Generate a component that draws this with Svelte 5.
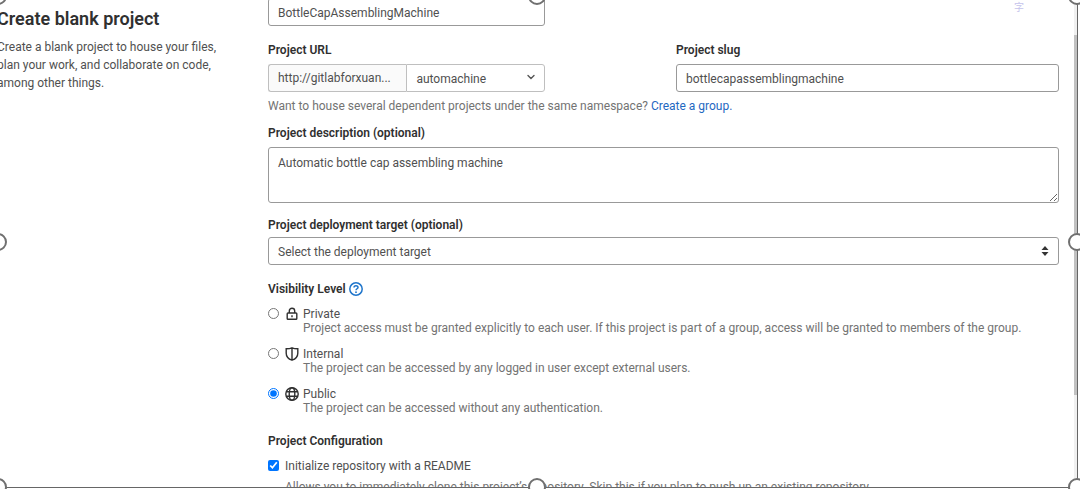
<script lang="ts">
  let name = $state('BottleCapAssemblingMachine');
  let slug = $state('bottlecapassemblingmachine');
  let namespace = $state('automachine');
  let description = $state('Automatic bottle cap assembling machine');
  let target = $state('');
  let visibility = $state('public');
  let readme = $state(true);

  const levels = [
    { id: 'private', title: 'Private', text: 'Project access must be granted explicitly to each user. If this project is part of a group, access will be granted to members of the group.' },
    { id: 'internal', title: 'Internal', text: 'The project can be accessed by any logged in user except external users.' },
    { id: 'public', title: 'Public', text: 'The project can be accessed without any authentication.' }
  ];

  const handles = ['top left', 'top center', 'top right', 'middle left', 'middle right', 'bottom left', 'bottom center', 'bottom right'];
</script>

<div class="canvas">
  <div class="window">
    <main class="page">
      <aside class="intro">
        <h1>Create blank project</h1>
        <p>Create a blank project to house your files, plan your work, and collaborate on code, among other things.</p>
      </aside>

      <form class="form">
        <div class="name-row">
          <input class="control name" aria-label="Project name" bind:value={name} />
          <span class="glyph">字</span>
        </div>

        <div class="url-row">
          <div class="url">
            <label class="label" for="namespace">Project URL</label>
            <div class="group">
              <span class="prefix">http://gitlabforxuan...</span>
              <div class="picker">
                <select id="namespace" class="control" bind:value={namespace}>
                  <option value="automachine">automachine</option>
                </select>
                <svg class="arrow" width="8" height="8" viewBox="0 0 8 8"><path d="M1 2.5l3 3 3-3" fill="none" stroke="#555" stroke-width="1.4" stroke-linecap="round" /></svg>
              </div>
            </div>
          </div>
          <div class="slug">
            <label class="label" for="slug">Project slug</label>
            <input id="slug" class="control" bind:value={slug} />
          </div>
        </div>
        <p class="help">Want to house several dependent projects under the same namespace? <a href="#group">Create a group.</a></p>

        <div class="field">
          <label class="label" for="description">Project description (optional)</label>
          <textarea id="description" class="control" bind:value={description}></textarea>
        </div>

        <div class="field target">
          <label class="label" for="target">Project deployment target (optional)</label>
          <div class="picker">
            <select id="target" class="control" bind:value={target}>
              <option value="">Select the deployment target</option>
            </select>
            <svg class="arrow" width="8" height="10" viewBox="0 0 8 10"><path d="M4 0l3.5 4h-7zM4 10l3.5-4h-7z" fill="#333" /></svg>
          </div>
        </div>

        <fieldset class="levels">
          <legend class="label">
            Visibility Level
            <a class="question" href="#visibility" aria-label="Visibility help">
              <svg width="14" height="14" viewBox="0 0 14 14" fill="none" stroke="#1f75cb" stroke-width="1.5">
                <circle cx="7" cy="7" r="6.2" />
                <path d="M5 5.6c0-2.6 4-2.5 4-.2C9 6.8 7 6.7 7 8.3" />
                <circle cx="7" cy="10.2" r=".9" fill="#1f75cb" stroke="none" />
              </svg>
            </a>
          </legend>
          {#each levels as l}
            <div class="level">
              <input type="radio" id={l.id} name="visibility" value={l.id} bind:group={visibility} />
              <svg class="icon" width="14" height="14" viewBox="0 0 14 14" fill="none" stroke="#303030" stroke-width="1.4">
                {#if l.id === 'private'}
                  <rect x="2.2" y="6" width="9.6" height="6.3" rx=".8" />
                  <path d="M4.3 6V4a2.7 2.7 0 0 1 5.4 0v2M7 8.3v2" />
                {:else if l.id === 'internal'}
                  <path d="M1.2 1.8C3.5 1.8 5.5 1.5 7 .8c1.5.7 3.5 1 5.8 1v4.4C12.8 9.5 10.5 12 7 13.2 3.5 12 1.2 9.5 1.2 6.2zM7 1v12" />
                {:else}
                  <circle cx="7" cy="7" r="6.2" />
                  <ellipse cx="7" cy="7" rx="2.8" ry="6.2" />
                  <path d="M1.3 4.7h11.4M1.3 9.3h11.4" />
                {/if}
              </svg>
              <label for={l.id}>
                {l.title}
                <span class="muted">{l.text}</span>
              </label>
            </div>
          {/each}
        </fieldset>

        <fieldset class="config">
          <legend class="label">Project Configuration</legend>
          <div class="check">
            <input type="checkbox" id="readme" bind:checked={readme} />
            <label for="readme">
              Initialize repository with a README
              <span class="muted">Allows you to immediately clone this project’s repository. Skip this if you plan to push up an existing repository.</span>
            </label>
          </div>
        </fieldset>
      </form>
    </main>
    <div class="scrollbar"><div class="thumb"></div></div>
  </div>

  {#each handles as h}
    <span class="handle {h}"></span>
  {/each}
</div>

<style>
  :global(body) { margin: 0; background: #fff; }

  .canvas {
    position: relative;
    height: 100vh;
    overflow: hidden;
    font: 12px/18px Roboto, "Noto Sans CJK SC", sans-serif;
    color: #505050;
  }
  .window {
    display: flex;
    height: calc(100vh - 2px);
    margin-right: 2px;
    border-right: 1px solid #666;
    border-bottom: 1px solid #666;
    overflow: hidden;
  }

  .page {
    flex: 1;
    min-width: 0;
    display: grid;
    grid-template-columns: 228px 1fr;
    gap: 43px;
    margin-left: -3px;
    padding-right: 15px;
    align-items: start;
  }
  .intro { padding-top: 8px; }
  h1 { margin: 0 0 8px; font-size: 18px; line-height: 22px; font-weight: 600; color: #303030; white-space: nowrap; }
  p { margin: 0; }

  .form { min-width: 0; margin-top: -2px; }
  .control {
    display: block;
    width: 100%;
    height: 28px;
    box-sizing: border-box;
    margin: 0;
    padding: 1px 9px 0;
    border: 1px solid #999;
    border-radius: 3px;
    background: #fff;
    color: #505050;
    font: inherit;
  }
  .label { display: block; padding: 0; font-weight: 600; color: #303030; }

  .name-row { display: flex; justify-content: space-between; margin-bottom: 15px; }
  .name { width: 35%; }
  .glyph { padding: 1px 35px 0 0; font-size: 10px; color: #c5c3ec; }

  .url-row { display: flex; justify-content: space-between; }
  .url { width: 35%; }
  .slug { width: 383px; }
  .url .label, .slug .label { margin-bottom: 5px; }
  .group { display: flex; }
  .prefix {
    flex: 1;
    padding: 1px 9px 0;
    border: 1px solid #bfbfbf;
    border-right: 0;
    border-radius: 3px 0 0 3px;
    background: #fafafa;
    line-height: 25px;
    white-space: nowrap;
  }
  .group .picker { width: 50%; }
  .group .control { border-color: #bfbfbf; border-radius: 0 3px 3px 0; }
  .picker { position: relative; }
  .picker select { appearance: none; }
  .arrow { position: absolute; right: 10px; top: 9px; pointer-events: none; }

  .help { margin: 5px 0 9px; color: #737373; }
  a { color: #1f68c1; text-decoration: none; }

  .field .label { margin-bottom: 5px; }
  textarea.control { height: 56px; padding-top: 6px; }
  .target { margin-top: 13px; }
  .target .label { margin-bottom: 3px; }

  fieldset { min-width: 0; margin: 15px 0 0; padding: 0; border: 0; }
  legend.label { display: flex; align-items: center; gap: 3px; margin-bottom: 9px; }
  .question { display: flex; }
  input[type='radio'], input[type='checkbox'] { flex: none; width: 11px; height: 11px; margin: 1px 0 0; }
  .level { display: flex; line-height: 14px; }
  .level + .level { margin-top: 12px; }
  .icon { flex: none; margin: 0 4px 0 6px; }
  .muted { display: block; color: #737373; white-space: nowrap; }
  .config { margin-top: 17px; }
  .check { display: flex; gap: 6px; line-height: 14px; }
  .check .muted { margin-top: 7px; }

  .scrollbar { flex: none; width: 3px; background: #f0f0f0; }
  .thumb { height: 74%; margin-top: 35px; background: #c1c1c1; }

  .handle {
    position: absolute;
    width: 18px;
    height: 18px;
    box-sizing: border-box;
    border: 2px solid #707070;
    border-radius: 50%;
    background: #fff;
  }
  .top { top: -13px; }
  .middle { top: calc(50% - 12px); }
  .bottom { bottom: -7px; }
  .left { left: -11px; }
  .center { left: calc(50% - 12px); }
  .right { right: -6px; }
</style>
